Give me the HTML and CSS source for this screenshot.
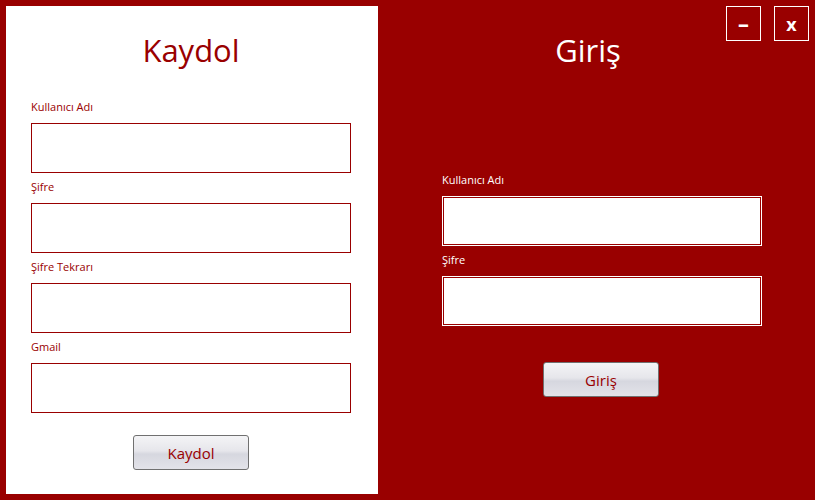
FILE: index.html
```html
<!DOCTYPE html>
<html>
<head>
<meta charset="utf-8">
<link rel="stylesheet" href="styles.css">
</head>
<body>
<div class="window">
  <section class="panel register">
    <h1 class="title">Kaydol</h1>
    <div class="field"><label class="label">Kullanıcı Adı</label><div class="input"></div></div>
    <div class="field"><label class="label">Şifre</label><div class="input"></div></div>
    <div class="field"><label class="label">Şifre Tekrarı</label><div class="input"></div></div>
    <div class="field"><label class="label">Gmail</label><div class="input"></div></div>
    <button class="btn">Kaydol</button>
  </section>
  <section class="panel login">
    <div class="controls">
      <span class="ctrl"><span class="dash">-</span></span>
      <span class="ctrl">x</span>
    </div>
    <h1 class="title">Giriş</h1>
    <div class="form">
      <div class="field"><label class="label">Kullanıcı Adı</label><div class="input"></div></div>
      <div class="field"><label class="label">Şifre</label><div class="input"></div></div>
      <button class="btn">Giriş</button>
    </div>
  </section>
</div>
</body>
</html>
```
FILE: styles.css
```css
html, body {
  margin: 0;
  padding: 0;
}
body {
  width: 815px;
  height: 500px;
  background: #990000;
  font-family: "Open Sans", "Noto Sans", sans-serif;
  overflow: hidden;
}
.window {
  display: flex;
  padding: 6px 6px 6px 6px;
  height: 488px;
}
.panel {
  display: flex;
  flex-direction: column;
  box-sizing: border-box;
  height: 488px;
}
.register {
  width: 372px;
  background: #fff;
  padding: 24px 0 0 25px;
}
.title {
  margin: 0;
  font-size: 31px;
  font-weight: normal;
  line-height: 40px;
  height: 40px;
}
.register .title {
  color: #990000;
  width: 320px;
  text-align: center;
  margin-bottom: 29px;
}
.field {
  display: flex;
  flex-direction: column;
  margin-bottom: 6px;
}
.label {
  font-size: 11px;
  line-height: 15px;
  height: 15px;
  margin-bottom: 9px;
}
.register .label {
  color: #990000;
}
.input {
  width: 320px;
  height: 50px;
  box-sizing: border-box;
  background: #fff;
}
.register .input {
  border: 1px solid #990000;
}
.btn {
  width: 116px;
  height: 35px;
  box-sizing: border-box;
  border: 1px solid #707070;
  border-radius: 3px;
  background: linear-gradient(#f4f4f6 0%, #e6e6eb 45%, #d6d7df 55%, #e3e3e9 100%);
  color: #990000;
  font-family: "Open Sans", "Noto Sans", sans-serif;
  font-size: 15px;
  padding: 0;
  align-self: flex-start;
}
.register .btn {
  margin: 16px 0 0 102px;
}
.login {
  flex: 1;
  position: relative;
  padding: 24px 0 0 0;
}
.login .title {
  color: #fff;
  text-align: center;
  margin-right: 11px;
}
.login .form {
  display: flex;
  flex-direction: column;
  padding-left: 64px;
  margin-top: 102px;
}
.login .label {
  color: #fff;
}
.login .input {
  border: 1px solid #fff;
  box-shadow: inset 0 0 0 1px #990000;
}
.login .btn {
  margin: 30px 0 0 101px;
}
.controls {
  position: absolute;
  top: 0;
  right: 0;
  display: flex;
  gap: 13px;
}
.ctrl {
  width: 35px;
  height: 35px;
  box-sizing: border-box;
  border: 1px solid #fff;
  color: #fff;
  font-weight: bold;
  font-size: 18px;
  display: flex;
  align-items: center;
  justify-content: center;
  line-height: 1;
}
.dash {
  display: inline-block;
  font-size: 22px;
  transform: translateY(-2px) scaleX(1.6);
}
```
